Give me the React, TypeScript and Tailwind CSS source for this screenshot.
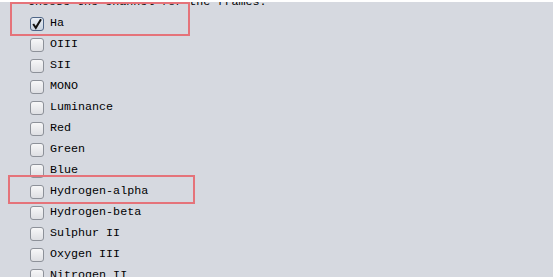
import { useState } from "react";

const channels = [
  "Ha",
  "OIII",
  "SII",
  "MONO",
  "Luminance",
  "Red",
  "Green",
  "Blue",
  "Hydrogen-alpha",
  "Hydrogen-beta",
  "Sulphur II",
  "Oxygen III",
  "Nitrogen II",
];

function Box({ checked }: { checked: boolean }) {
  return (
    <span
      className={
        checked
          ? "flex h-[14px] w-[14px] items-center justify-center rounded-[3px] border border-[#4f6687] bg-gradient-to-b from-[#e9eef5] to-[#c9d3e0]"
          : "flex h-[14px] w-[14px] items-center justify-center rounded-[3px] border border-[#8d9199] bg-gradient-to-b from-[#f7f7f8] to-[#dedfe3]"
      }
    >
      {checked && (
        <svg width="12" height="12" viewBox="0 0 12 12">
          <path d="M2.2 6 L4.8 9.8 L10 1.2" fill="none" stroke="#111" strokeWidth="2" />
        </svg>
      )}
    </span>
  );
}

export default function App() {
  const [selected, setSelected] = useState<string[]>(["Ha"]);

  const toggle = (name: string) =>
    setSelected((prev) =>
      prev.includes(name) ? prev.filter((n) => n !== name) : [...prev, name]
    );

  return (
    <div
      className="relative h-[277px] w-[553px] overflow-hidden bg-[#d6d9e0] text-[11.7px] text-black"
      style={{ fontFamily: '"Liberation Mono", "Courier New", monospace' }}
    >
      <div className="relative z-10 h-[2px] bg-white" />
      <div className="-mt-[10px] flex flex-col">
        <div className="flex h-[21px] items-center pl-[28px]">
          Choose the channel for the frames:
        </div>
        {channels.map((name) => (
          <label
            key={name}
            className="flex h-[21px] cursor-pointer items-center gap-[6px] pl-[30px]"
            onClick={() => toggle(name)}
          >
            <Box checked={selected.includes(name)} />
            <span>{name}</span>
          </label>
        ))}
      </div>

      {/* annotation frames */}
      <div className="absolute left-[10px] top-[2px] h-[34px] w-[180px] border-2 border-[#e5737a]" />
      <div className="absolute left-[8px] top-[175px] h-[29px] w-[187px] border-2 border-[#e5737a]" />
    </div>
  );
}
